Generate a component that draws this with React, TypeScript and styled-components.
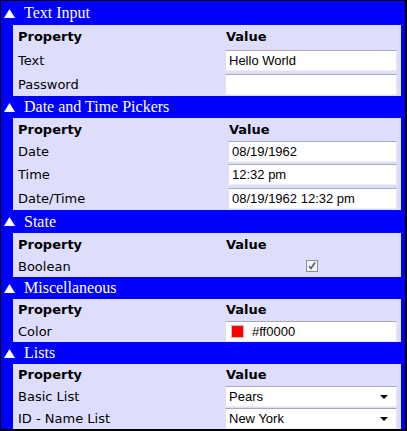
import React from 'react'
import styled, { createGlobalStyle } from 'styled-components'

const GlobalStyle = createGlobalStyle`
  html, body {
    margin: 0;
    padding: 0;
    background: #ffffff;
  }
`

const Frame = styled.div`
  width: 407px;
  height: 431px;
  box-sizing: border-box;
  border-style: solid;
  border-color: #000000;
  border-width: 1px 2px 2px 1px;
  background: #0000ff;
  display: flex;
  flex-direction: column;
  font-family: 'DejaVu Sans', Verdana, sans-serif;
  font-size: 13px;
  color: #000000;
  overflow: hidden;
`

const SectionHeader = styled.div<{ $h?: number }>`
  flex: none;
  height: ${(p) => p.$h ?? 22}px;
  display: flex;
  align-items: center;
  gap: 9px;
  padding-left: 3px;
  color: #ffffff;
  font-family: 'Liberation Serif', 'Times New Roman', serif;
  font-size: 16px;
  line-height: 1;
`

const Grid = styled.div<{ $col: number }>`
  flex: none;
  margin: 0 4px 0 12px;
  background: #dedefc;
  display: grid;
  grid-template-columns: ${(p) => p.$col}px 1fr;
`

const Cell = styled.div<{ $h?: number; $bold?: boolean }>`
  height: ${(p) => p.$h ?? 23}px;
  display: flex;
  align-items: center;
  padding-left: 5px;
  font-weight: ${(p) => (p.$bold ? 700 : 400)};
  white-space: nowrap;
`

const ValueCell = styled.div<{ $h?: number; $bold?: boolean; $center?: boolean }>`
  height: ${(p) => p.$h ?? 23}px;
  display: flex;
  align-items: center;
  justify-content: ${(p) => (p.$center ? 'center' : 'flex-start')};
  padding-right: 4px;
  padding-left: ${(p) => (p.$bold ? 1 : 0)}px;
  font-weight: ${(p) => (p.$bold ? 700 : 400)};
  white-space: nowrap;
`

const Field = styled.div`
  box-sizing: border-box;
  width: 100%;
  height: 21px;
  background: #ffffff;
  border-top: 1px solid #a9abb2;
  border-left: 1px solid #e0e1e8;
  border-right: 1px solid #e4e8ef;
  border-bottom: 1px solid #eceff5;
  display: flex;
  align-items: center;
  padding-left: 3px;
  font-family: 'Liberation Sans', Arial, sans-serif;
  font-size: 13px;
  color: #000000;
  position: relative;
`

const Swatch = styled.span<{ $color: string }>`
  width: 11px;
  height: 11px;
  background: ${(p) => p.$color};
  border: 1px solid #c4c4c4;
  margin-left: 2px;
  margin-right: 8px;
`

const Arrow = styled.span`
  position: absolute;
  right: 8px;
  top: 8px;
  width: 0;
  height: 0;
  border-left: 4px solid transparent;
  border-right: 4px solid transparent;
  border-top: 4px solid #000000;
`

const CheckBox = styled.span`
  box-sizing: border-box;
  width: 12px;
  height: 12px;
  border: 1px solid #8e8f8f;
  background: #f2f2f2;
  display: inline-flex;
  align-items: center;
  justify-content: center;
  margin-left: 2px;
`

const Triangle = () => (
  <svg width="11" height="9" viewBox="0 0 11 9">
    <polygon points="5.5,0 11,9 0,9" fill="#ffffff" />
  </svg>
)

type Row = { label: string; value: React.ReactNode; h: number; center?: boolean }

type SectionProps = {
  title: string
  col: number
  rows: Row[]
  headerH: number
  propH: number
}

const Section = ({ title, col, rows, headerH, propH }: SectionProps) => (
  <>
    <SectionHeader $h={headerH}>
      <Triangle />
      <span>{title}</span>
    </SectionHeader>
    <Grid $col={col}>
      <Cell $bold $h={propH}>
        Property
      </Cell>
      <ValueCell $bold $h={propH}>
        Value
      </ValueCell>
      {rows.map((r) => (
        <React.Fragment key={r.label}>
          <Cell $h={r.h}>{r.label}</Cell>
          <ValueCell $h={r.h} $center={r.center}>
            {r.value}
          </ValueCell>
        </React.Fragment>
      ))}
    </Grid>
  </>
)

const Check = () => (
  <CheckBox>
    <svg width="8" height="8" viewBox="0 0 8 8">
      <path d="M1 4 L3 6.5 L7 0.5" stroke="#4b5c8c" strokeWidth="1.6" fill="none" />
    </svg>
  </CheckBox>
)

const Select = ({ children }: { children: React.ReactNode }) => (
  <Field>
    {children}
    <Arrow />
  </Field>
)

export default function App() {
  return (
    <>
      <GlobalStyle />
      <Frame>
        <Section
          title="Text Input"
          col={212}
          headerH={24}
          propH={23}
          rows={[
            { label: 'Text', value: <Field>Hello World</Field>, h: 24 },
            { label: 'Password', value: <Field />, h: 24 },
          ]}
        />
        <Section
          title="Date and Time Pickers"
          col={215}
          headerH={22}
          propH={22}
          rows={[
            { label: 'Date', value: <Field>08/19/1962</Field>, h: 23 },
            { label: 'Time', value: <Field>12:32 pm</Field>, h: 23 },
            { label: 'Date/Time', value: <Field>08/19/1962 12:32 pm</Field>, h: 24 },
          ]}
        />
        <Section
          title="State"
          col={212}
          headerH={23}
          propH={22}
          rows={[{ label: 'Boolean', value: <Check />, h: 22, center: true }]}
        />
        <Section
          title="Miscellaneous"
          col={212}
          headerH={22}
          propH={21}
          rows={[
            {
              label: 'Color',
              value: (
                <Field>
                  <Swatch $color="#ff0000" />
                  #ff0000
                </Field>
              ),
              h: 22,
            },
          ]}
        />
        <Section
          title="Lists"
          col={212}
          headerH={22}
          propH={21}
          rows={[
            { label: 'Basic List', value: <Select>Pears</Select>, h: 22 },
            { label: 'ID - Name List', value: <Select>New York</Select>, h: 22 },
          ]}
        />
      </Frame>
    </>
  )
}
